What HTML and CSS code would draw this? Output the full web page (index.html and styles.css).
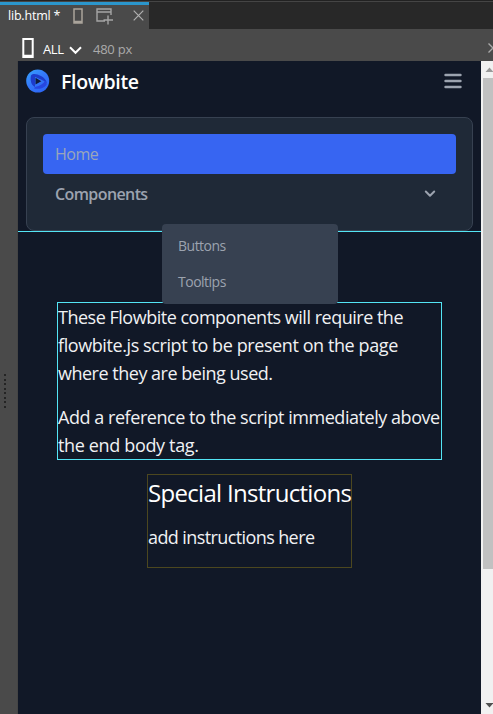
FILE: index.html
```
<!DOCTYPE html>
<html lang="en">
<head>
<meta charset="utf-8">
<title>lib.html</title>
<link rel="stylesheet" href="styles.css">
</head>
<body>
<div class="tabs">
  <div class="tab">
    <span class="tab-name">lib.html *</span>
    <svg class="tab-phone" width="10" height="16" viewBox="0 0 10 16"><path d="M1 1h8v14H1zM1 13.5h8" fill="none" stroke="#aaa49b" stroke-width="1.5"/></svg>
    <svg class="tab-window" width="17" height="17" viewBox="0 0 17 17"><path d="M9 13H1V1h14v6M1 4h14M12 7.5v9M7.5 12H17" fill="none" stroke="#a5a5a5" stroke-width="1.4"/></svg>
    <svg class="tab-close" width="11" height="11" viewBox="0 0 11 11"><path d="M.7.7l9.6 9.6M10.3.7L.7 10.3" stroke="#b0b0b0" stroke-width="1.2"/></svg>
  </div>
</div>
<div class="toolbar">
  <svg class="device" width="12" height="20" viewBox="0 0 12 20"><path d="M1.3 1h9.4v18H1.3zM1 17.8h10" fill="none" stroke="#fff" stroke-width="2"/></svg>
  <span class="all">ALL</span>
  <svg class="all-arrow" width="13" height="9" viewBox="0 0 13 9"><path d="M1 1.3l5.5 5.5L12 1.3" fill="none" stroke="#fff" stroke-width="2"/></svg>
  <span class="px">480 px</span>
  <svg class="more" width="5" height="10" viewBox="0 0 5 10"><path d="M.5.5L5 5 .5 9.5" fill="none" stroke="#aaa" stroke-width="1.4"/></svg>
</div>
<div class="workspace">
  <div class="grip"><i></i><i></i><i></i><i></i><i></i><i></i><i></i><i></i></div>
  <main class="page">
    <nav class="nav">
      <header class="brand">
        <svg width="24" height="24" viewBox="0 0 24 24">
          <defs>
            <linearGradient id="ring" x1="0" y1="0" x2=".8" y2="1"><stop offset="0" stop-color="#36a4ff"/><stop offset=".5" stop-color="#3478fa"/><stop offset="1" stop-color="#2c64f4"/></linearGradient>
          </defs>
          <circle cx="11.700" cy="12" r="11.500" fill="url(#ring)"/>
          <path d="M5 6.500C7 4 11 5 15 7c3 1.500 5 4 6 7-4-3-8-4.500-12-6v10C5 16 4 11 5 6.500z" fill="#1d3ccb"/>
          <path d="M9 18c5-1 9-3.500 10-6.500 1.500 1.500 2 3 1.500 4.500-3 3.500-8 4.500-12.500 3.500z" fill="#2747e0"/>
          <path d="M9.500 8.800l5.800 3.400-5.800 3.400z" fill="#111c3c"/>
        </svg>
        <span class="brand-name">Flowbite</span>
        <svg class="burger" width="18" height="16" viewBox="0 0 18 16"><path d="M1.500 2h15M1.500 8h15M1.500 14h15" stroke="#9ca3af" stroke-width="2.400" stroke-linecap="round"/></svg>
      </header>
      <div class="menu">
        <a class="item home">Home</a>
        <a class="item components"><span>Components</span><svg width="12" height="8" viewBox="0 0 12 8"><path d="M1.800 1.500L6 5.700l4.200-4.200" fill="none" stroke="#9ca3af" stroke-width="2" stroke-linecap="round" stroke-linejoin="round"/></svg></a>
      </div>
      <div class="dropdown"><a class="buttons">Buttons</a><a class="tooltips">Tooltips</a></div>
    </nav>
    <section class="notice">
      <p><span class="l1">These Flowbite components will require the</span><br><span class="l2">flowbite.js script to be present on the page</span><br><span class="l3">where they are being used.</span></p>
      <p><span class="l4">Add a reference to the script immediately above</span><br><span class="l5">the end body tag.</span></p>
    </section>
    <section class="special">
      <h2>Special Instructions</h2>
      <p>add instructions here</p>
    </section>
  </main>
  <div class="scroll">
    <svg width="10" height="17" viewBox="0 0 10 17"><path d="M2.500 11h8L6.500 6.500z" fill="#999"/></svg>
    <div class="thumb"></div>
    <svg class="down" width="10" height="17" viewBox="0 0 10 17"><path d="M2.500 6h8l-4 4.500z" fill="#505050"/></svg>
  </div>
</div>
</body>
</html>
```
FILE: styles.css
```
* { box-sizing: border-box; }
body { margin: 0; width: 493px; height: 714px; overflow: hidden; background: #4a4a4a; font-family: "Open Sans", "Noto Sans", sans-serif; }
svg { display: block; flex: none; }
span, a, h2, p { white-space: nowrap; }
.tabs { height: 29px; background: #282828; border-top: 1px solid #222; box-shadow: inset 0 1px #454545; }
.tab { width: 149px; height: 28px; margin-top: 1px; border-top: 3px solid #2b96cc; background: #4a4a4a; display: flex; align-items: flex-start; }
.tab-name { margin: 1px 0 0 8px; width: 65px; font-size: 12.5px; line-height: 19px; letter-spacing: -.2px; color: #fff; }
.tab-phone { margin-top: 3px; }
.tab-window { margin: 3px 0 0 13px; }
.tab-close { margin: 5px 0 0 20px; }
.toolbar { height: 32px; display: flex; align-items: flex-start; padding: 9px 0 0 22px; background: #4a4a4a; color: #fff; }
.all { margin: 2px 0 0 9px; width: 26px; font-size: 13px; line-height: 18px; letter-spacing: -.4px; }
.all-arrow { margin-top: 8px; }
.px { margin: 2px 0 0 11px; font-size: 13px; line-height: 18px; letter-spacing: -.25px; color: #aaa; }
.more { margin: 5px 0 0 auto; }
.workspace { height: 653px; display: flex; }
.grip { width: 18px; padding: 313px 0 0 4px; display: flex; flex-direction: column; gap: 2.5px; border-right: 1px solid #454545; }
.grip i { width: 2px; height: 2px; flex: none; background: #242424; }
.page { width: 463px; background: #111827; color: #f0f1f3; display: flex; flex-direction: column; align-items: center; }
.nav { position: relative; width: 463px; height: 171px; padding: 0 8px; border-bottom: 1px solid #54e5f5; }
.brand { height: 56px; padding: 8px 11px 0 0; display: flex; align-items: flex-start; }
.brand-name { margin: -1px 0 0 11px; color: #fff; font-size: 19.5px; line-height: 28px; font-weight: 600; letter-spacing: -.3px; }
.burger { margin: 4px 0 0 auto; }
.menu { width: 447px; height: 114px; padding: 16px; border: 1px solid #374151; border-radius: 8px; background: #1f2937; color: #9ca3af; }
.item { height: 40px; padding: 0 20px 0 12px; display: flex; align-items: center; justify-content: space-between; font-size: 16px; line-height: 24px; }
.home { border-radius: 4px; background: #3765f2; color: #9aa5bb; letter-spacing: -.5px; }
.components { font-weight: 600; letter-spacing: -.6px; }
.dropdown { position: absolute; z-index: 1; left: 144px; top: 163px; width: 176px; height: 80px; padding: 4px 16px; border-radius: 4px; background: #374151; color: #9ca3af; font-size: 14px; line-height: 36px; }
.dropdown a { display: block; letter-spacing: -.5px; }
.notice { width: 385px; height: 158px; margin: 70px 0 0; border: 1px solid #54e5f5; font-size: 18px; line-height: 28px; }
.notice p { margin: 0 0 16px; }
.l1 { letter-spacing: -.49px; }
.l2 { letter-spacing: -.41px; }
.l3 { letter-spacing: -.49px; }
.l4 { letter-spacing: -.45px; }
.l5 { letter-spacing: -.35px; }
.special { width: 205px; height: 94px; margin-top: 14px; border: 1px solid #4c471f; }
.special h2 { margin: 2px 0 14px; font-size: 24px; line-height: 32px; font-weight: 400; letter-spacing: -.7px; color: #fff; }
.special p { margin: 0; font-size: 18px; line-height: 28px; letter-spacing: -.6px; }
.scroll { width: 12px; padding-left: 2px; display: flex; flex-direction: column; background: #f1f1f1; }
.thumb { height: 491px; background: #c1c1c1; }
.down { margin-top: auto; }
```
